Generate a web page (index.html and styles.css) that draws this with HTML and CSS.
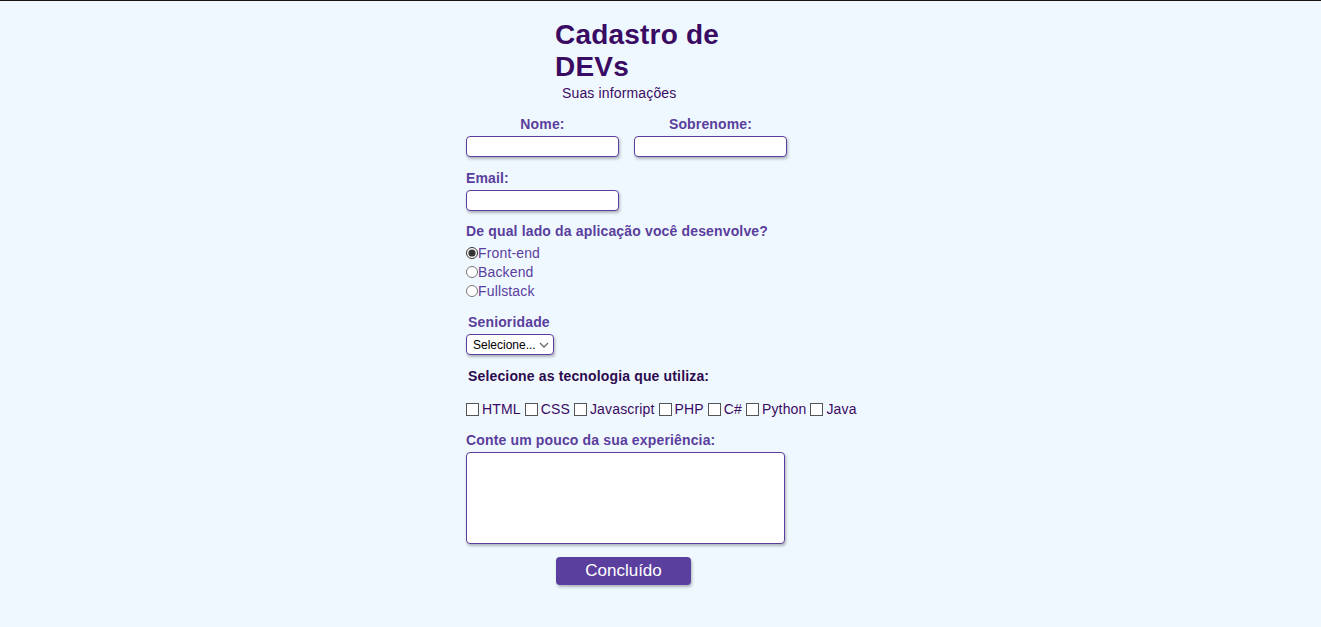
FILE: index.html
```html
<!DOCTYPE html>
<html lang="pt-BR">
<head>
<meta charset="utf-8">
<title>Cadastro de DEVs</title>
<link rel="stylesheet" href="styles.css">
</head>
<body>
<main class="page">
  <header class="head">
    <h1 class="title">Cadastro de DEVs</h1>
    <p class="subtitle">Suas informações</p>
  </header>
  <form class="form">
    <div class="name-row">
      <div class="col">
        <label class="lbl lbl-center" for="nome">Nome:</label>
        <input class="field" id="nome" type="text">
      </div>
      <div class="col">
        <label class="lbl lbl-center" for="sobrenome">Sobrenome:</label>
        <input class="field" id="sobrenome" type="text">
      </div>
    </div>
    <div class="group">
      <label class="lbl" for="email">Email:</label>
      <input class="field" id="email" type="email">
    </div>
    <div class="group radios">
      <span class="lbl lbl-q">De qual lado da aplicação você desenvolve?</span>
      <label class="opt"><input class="radio" type="radio" name="lado" checked>Front-end</label>
      <label class="opt"><input class="radio" type="radio" name="lado">Backend</label>
      <label class="opt"><input class="radio" type="radio" name="lado">Fullstack</label>
    </div>
    <div class="group sen">
      <label class="lbl lbl-indent" for="sen">Senioridade</label>
      <select class="select" id="sen">
        <option>Selecione...</option>
        <option>Júnior</option>
        <option>Pleno</option>
        <option>Sênior</option>
      </select>
    </div>
    <div class="group tech">
      <span class="lbl lbl-dark lbl-indent">Selecione as tecnologia que utiliza:</span>
      <div class="checks">
        <label class="chk"><input class="box" type="checkbox">HTML</label>
        <label class="chk"><input class="box" type="checkbox">CSS</label>
        <label class="chk"><input class="box" type="checkbox">Javascript</label>
        <label class="chk"><input class="box" type="checkbox">PHP</label>
        <label class="chk"><input class="box" type="checkbox">C#</label>
        <label class="chk"><input class="box" type="checkbox">Python</label>
        <label class="chk"><input class="box" type="checkbox">Java</label>
      </div>
    </div>
    <div class="group exp">
      <label class="lbl" for="exp">Conte um pouco da sua experiência:</label>
      <textarea class="area" id="exp"></textarea>
    </div>
    <div class="actions">
      <button class="btn" type="button">Concluído</button>
    </div>
  </form>
</main>
</body>
</html>
```
FILE: styles.css
```css
html, body {
  margin: 0;
  padding: 0;
}
body {
  background: #f0f8ff;
  border-top: 1px solid #1a1410;
  font-family: "Liberation Sans", Arial, sans-serif;
  min-height: 626px;
}
.page {
  width: 390px;
  margin: 0 auto;
  padding-top: 18px;
  padding-left: 1px;
}
.head {
  padding-left: 89px;
  width: 212px;
}
.title {
  margin: 0;
  font-size: 28px;
  line-height: 32px;
  font-weight: bold;
  color: #3a0b63;
  letter-spacing: 0.2px;
}
.subtitle {
  margin: 2px 0 0 7px;
  font-size: 14px;
  line-height: 16px;
  color: #3a0b63;
  letter-spacing: 0.15px;
}
.form {
  display: flex;
  flex-direction: column;
  margin-top: 15px;
}
.lbl {
  display: block;
  font-size: 14px;
  line-height: 16px;
  font-weight: bold;
  color: #5a3e9d;
  letter-spacing: 0.15px;
}
.lbl-center { text-align: center; }
.lbl-indent { padding-left: 2px; }
.lbl-dark { color: #2c0b4e; }
.name-row {
  display: flex;
  gap: 15px;
}
.col {
  display: flex;
  flex-direction: column;
  gap: 4px;
  width: 153px;
}
.field {
  box-sizing: border-box;
  width: 153px;
  height: 21px;
  border: 1px solid #5a3e9d;
  border-radius: 4px;
  background: #fff;
  box-shadow: 1px 2px 3px rgba(0, 0, 0, 0.28);
  margin: 0;
  padding: 0 4px;
  outline: none;
}
.group {
  display: flex;
  flex-direction: column;
  align-items: flex-start;
  gap: 4px;
  margin-top: 13px;
}
.radios { margin-top: 12px; gap: 0; }
.lbl-q { margin-bottom: 4px; }
.opt {
  display: flex;
  align-items: center;
  font-size: 14px;
  line-height: 16px;
  height: 19px;
  color: #5a3e9d;
  letter-spacing: 0.15px;
}
.radio {
  width: 12px;
  height: 12px;
  margin: 0;
  accent-color: #333;
}
.sen { margin-top: 14px; }
.select {
  box-sizing: border-box;
  width: 88px;
  height: 21px;
  border: 1px solid #5a3e9d;
  border-radius: 4px;
  background-color: #fff;
  background-image: url("data:image/svg+xml;utf8,<svg xmlns='http://www.w3.org/2000/svg' width='10' height='6' viewBox='0 0 10 6'><path d='M1 1l4 4 4-4' fill='none' stroke='%23666' stroke-width='1.3'/></svg>");
  background-repeat: no-repeat;
  background-position: right 4px center;
  -webkit-appearance: none;
  appearance: none;
  box-shadow: 1px 2px 3px rgba(0, 0, 0, 0.28);
  font-family: "Liberation Sans", Arial, sans-serif;
  font-size: 12px;
  color: #000;
  padding: 0 16px 0 6px;
  margin: 0;
}
.tech { margin-top: 13px; gap: 17px; }
.checks {
  display: flex;
  align-items: center;
  flex-wrap: nowrap;
  gap: 4px;
  white-space: nowrap;
}
.chk {
  display: flex;
  align-items: center;
  font-size: 14px;
  line-height: 17px;
  color: #3a0b63;
  letter-spacing: 0.15px;
}
.box {
  -webkit-appearance: none;
  appearance: none;
  box-sizing: border-box;
  width: 13px;
  height: 13px;
  margin: 0 3px 0 0;
  border: 1px solid #555;
  border-radius: 0;
  background: #fff;
}
.box:checked {
  background: #555;
}
.exp { margin-top: 14px; }
.area {
  box-sizing: border-box;
  width: 319px;
  height: 92px;
  border: 1px solid #5a3e9d;
  border-radius: 4px;
  background: #fff;
  box-shadow: 1px 2px 3px rgba(0, 0, 0, 0.28);
  margin: 0;
  resize: none;
  outline: none;
}
.actions {
  display: flex;
  padding-left: 90px;
  margin-top: 13px;
}
.btn {
  width: 135px;
  height: 28px;
  border: none;
  border-radius: 4px;
  background: #5b3f9e;
  color: #fff;
  font-family: "Liberation Sans", Arial, sans-serif;
  font-size: 17px;
  box-shadow: 1px 2px 3px rgba(0, 0, 0, 0.28);
  cursor: pointer;
}
```
